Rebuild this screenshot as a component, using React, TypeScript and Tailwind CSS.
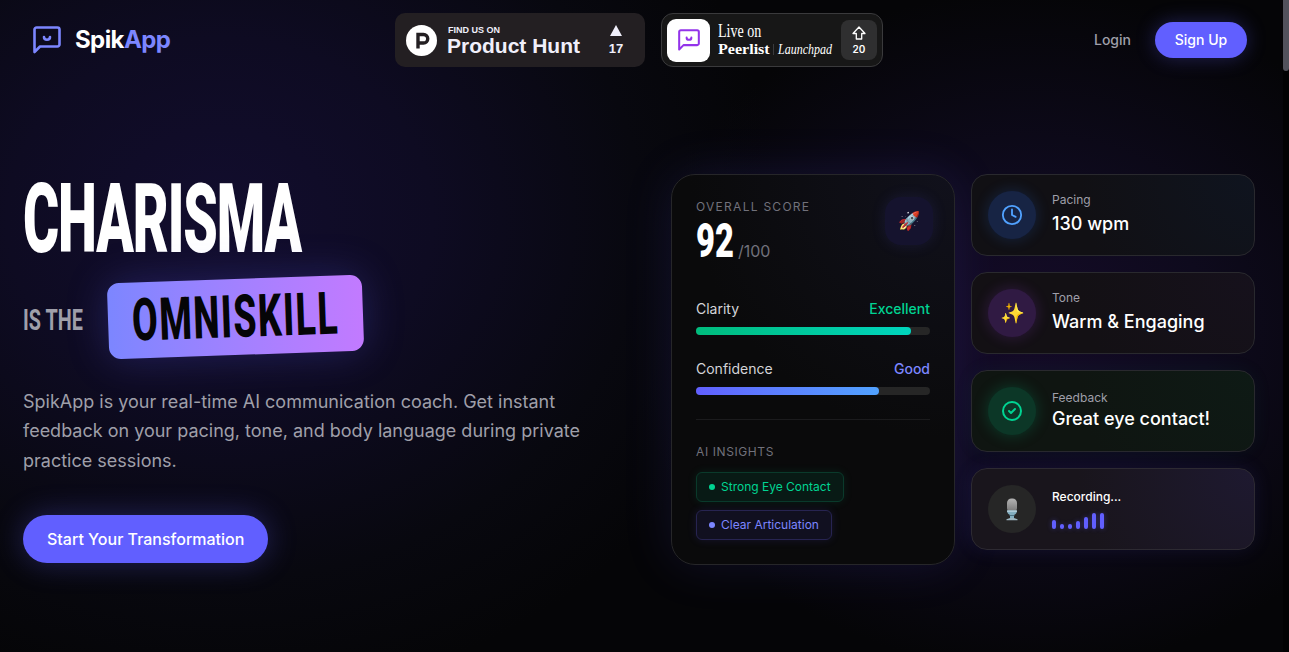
import type { ReactNode } from "react";
import { Clock } from "lucide-react";

export default function App() {
  return (
    <div className="flex h-[652px] w-full overflow-hidden bg-[#050507] font-['Inter',sans-serif] text-white">
      <div className="h-full w-[1283px] shrink-0 bg-[radial-gradient(ellipse_560px_480px_at_220px_220px,#120d2e_0%,#0e0b22_38%,#08080f_75%,transparent_100%),radial-gradient(ellipse_400px_340px_at_1030px_330px,#150b28_0%,#0e0a1d_45%,transparent_100%)]">
        <div className="w-[1278px]">
          <Header />
          <main className="flex gap-16 px-[23px] pt-[94px]">
            <Hero />
            <div className="flex w-[584px] gap-4">
              <ScoreCard />
              <StatCards />
            </div>
          </main>
        </div>
      </div>
      <div className="h-full w-1.5 bg-[#020203]">
        <div className="h-[71px] rounded-b-full bg-[#52525c]" />
      </div>
    </div>
  );
}

function LogoMark({ className }: { className?: string }) {
  return (
    <svg
      viewBox="0 0 28 28"
      fill="none"
      stroke="currentColor"
      strokeWidth="2.6"
      strokeLinecap="round"
      strokeLinejoin="round"
      className={className}
    >
      <path d="M1.5 26V3.6A2.1 2.1 0 0 1 3.600 1.500h20.800a2.100 2.100 0 0 1 2.100 2.100v14.800a2.100 2.100 0 0 1-2.100 2.100H7z" />
      <path d="M11 11c0 3.700 6 3.700 6 0" />
    </svg>
  );
}

function Header() {
  return (
    <header className="flex h-20 items-center pr-[31px] pl-8">
      <div className="flex w-[363px] items-center gap-3.5">
        <LogoMark className="ml-px size-7 text-[#7c86ff]" />
        <span className="text-2xl font-bold tracking-tight">
          Spik<span className="text-[#7c86ff]">App</span>
        </span>
      </div>
      <div className="flex gap-4">
        <ProductHuntBadge />
        <PeerlistBadge />
      </div>
      <div className="flex flex-1 items-center justify-end gap-6">
        <a className="text-sm font-medium text-[#9f9fa9]">Login</a>
        <button className="h-9 w-[92px] rounded-full bg-[#615fff] text-sm font-medium shadow-[0_0_20px_rgba(97,95,255,0.3)]">
          Sign Up
        </button>
      </div>
    </header>
  );
}

function ProductHuntBadge() {
  return (
    <div className="flex h-[54px] w-[250px] items-center rounded-[10px] bg-[#231f22] pl-[11px] font-['Liberation_Sans',sans-serif] font-bold text-[#f0effb]">
      <svg viewBox="0 0 31 31" className="size-[31px]">
        <circle cx="15.500" cy="15.500" r="15.500" fill="#fff" />
        <path
          d="M12 23.500V9.500h5.500a4.200 4.200 0 0 1 0 8.500H12"
          fill="none"
          stroke="#231f22"
          strokeWidth="3.400"
        />
      </svg>
      <div className="ml-2.5 w-[150px]">
        <div className="mt-0.5 ml-px text-[9px] leading-[10px]">FIND US ON</div>
        <div className="text-[21px] leading-[22px]">Product Hunt</div>
      </div>
      <div className="ml-[5px] flex w-7 flex-col items-center">
        <svg viewBox="0 0 12 11" className="h-[11px] w-3">
          <path d="M6 0l6 11H0z" fill="currentColor" />
        </svg>
        <span className="mt-[5px] text-[13px] leading-[15px]">17</span>
      </div>
    </div>
  );
}

function PeerlistBadge() {
  return (
    <div className="flex h-[54px] w-[222px] items-center rounded-xl border border-[#3a3a3c] bg-[#171717] pl-[5px] font-['Liberation_Serif',serif]">
      <div className="flex size-[43px] shrink-0 items-center justify-center rounded-[9px] bg-white">
        <LogoMark className="size-[22px] text-[#9333ea]" />
      </div>
      <div className="ml-2 w-[114px]">
        <div className="w-max origin-left scale-x-[0.74] text-[19px] leading-[18px]">Live on</div>
        <div className="flex h-[18px] items-center leading-[18px]">
          <div className="w-[55px] shrink-0">
            <div className="w-max origin-left scale-x-[1.07] text-[15px] font-bold">Peerlist</div>
          </div>
          <div className="h-[11px] w-px shrink-0 bg-[#3a3a3c]" />
          <div className="ml-1 w-max shrink-0 origin-left scale-x-[0.8] text-[15px] italic">Launchpad</div>
        </div>
      </div>
      <div className="ml-[9px] flex h-10 w-9 shrink-0 flex-col items-center justify-center rounded-lg bg-[#2f2f30] font-['Inter',sans-serif]">
        <svg viewBox="0 0 14 14" className="size-3.5" fill="none" stroke="currentColor" strokeWidth="1.3" strokeLinejoin="round">
          <path d="M7 1l6 6.500H9.700V13H4.300V7.500H1z" />
        </svg>
        <span className="mt-[3px] text-[10px] leading-3 font-semibold">20</span>
      </div>
    </div>
  );
}

function Hero() {
  return (
    <div className="w-[584px]">
      <h1 className="font-['Roboto',sans-serif]">
        <div className="h-[96px] w-[280px] text-[96px] leading-[90px] font-black">
          <span className="inline-block origin-left scale-x-[0.575] tracking-[-0.02em]">CHARISMA</span>
        </div>
        <div className="flex h-[96px] items-center">
          <div className="w-[85px] text-[30px] font-bold text-[#9f9fa9]">
            <span className="mt-0.5 inline-block origin-left scale-x-[0.66] whitespace-nowrap">IS THE</span>
          </div>
          <div className="-mt-0.5 h-[76px] w-[255px] shrink-0 -rotate-2 rounded-xl bg-linear-to-r from-[#7c86ff] to-[#c27aff] pl-6 text-[59px] leading-[76px] font-extrabold text-[#050507] shadow-[0_0_40px_rgba(97,95,255,0.25)]">
            <span className="inline-block origin-left scale-x-[0.63] tracking-[0.04em]">OMNISKILL</span>
          </div>
        </div>
      </h1>
      <p className="mt-[21px] text-lg leading-[29.250px] text-[#9f9fa9]">
        SpikApp is your real-time AI communication coach. Get instant feedback on your pacing, tone,
        and body language during private practice sessions.
      </p>
      <button className="mt-10 h-12 rounded-full bg-[#615fff] px-6 text-base font-medium shadow-[0_0_30px_rgba(97,95,255,0.3)]">
        Start Your Transformation
      </button>
    </div>
  );
}

function ScoreCard() {
  return (
    <section className="h-[391px] w-[284px] rounded-3xl border border-[#262629] bg-[radial-gradient(circle_at_100%_0%,#11111c_0%,#0a0a0b_55%)] px-6 pt-6 shadow-[0_0_50px_rgba(97,95,255,0.13)]">
      <div className="flex items-start justify-between">
        <div>
          <div className="text-xs tracking-[0.106em] text-[#71717b]">OVERALL SCORE</div>
          <div className="flex h-12 items-end">
            <div className="w-[39px] font-['Roboto',sans-serif] text-[48px] leading-[44px] font-black">
              <span className="inline-block origin-left scale-x-[0.68]">92</span>
            </div>
            <span className="ml-[3px] text-base text-[#71717b]">/100</span>
          </div>
        </div>
        <div className="-mt-0.5 mr-[-3px] flex size-12 items-center justify-center rounded-2xl bg-[#15132e] text-lg shadow-[0_0_15px_rgba(97,95,255,0.12)]">
          🚀
        </div>
      </div>
      <div className="mt-9 space-y-6">
        <Meter label="Clarity" value="Excellent" percent={92} tone="text-[#00d492]" fill="from-[#00bc7d] to-[#00d5be]" />
        <Meter label="Confidence" value="Good" percent={78} tone="text-[#7c86ff]" fill="from-[#615fff] to-[#51a2ff]" />
      </div>
      <div className="mt-6 border-t border-[#1b1b1d] pt-6">
        <div className="text-xs tracking-wider text-[#71717b]">AI INSIGHTS</div>
        <div className="mt-3 flex flex-col items-start gap-2">
          <span className="flex h-[30px] items-center gap-1.5 rounded-md border border-[#0a3a2b] bg-[#081a15] px-3 text-xs text-[#00d492] shadow-[0_0_10px_rgba(0,188,125,0.12)]">
            <i className="size-1.5 rounded-full bg-[#00d492]" />
            Strong Eye Contact
          </span>
          <span className="flex h-[30px] items-center gap-1.5 rounded-md border border-[#272451] bg-[#111020] px-3 text-xs text-[#7c86ff] shadow-[0_0_10px_rgba(97,95,255,0.14)]">
            <i className="size-1.5 rounded-full bg-[#7c86ff]" />
            Clear Articulation
          </span>
        </div>
      </div>
    </section>
  );
}

function Meter({
  label,
  value,
  percent,
  tone,
  fill,
}: {
  label: string;
  value: string;
  percent: number;
  tone: string;
  fill: string;
}) {
  return (
    <div>
      <div className="flex justify-between text-sm">
        <span className="text-[#d4d4d8]">{label}</span>
        <span className={`font-medium ${tone}`}>{value}</span>
      </div>
      <div className="mt-2 h-2 rounded-full bg-[#262626]">
        <div className={`h-full rounded-full bg-linear-to-r ${fill}`} style={{ width: `${percent}%` }} />
      </div>
    </div>
  );
}

const bars = [9, 5, 5, 8, 12, 16, 16];

function StatCards() {
  return (
    <div className="flex w-[284px] flex-col gap-4">
      <Stat
        label="Pacing"
        value="130 wpm"
        card="bg-[radial-gradient(circle_at_100%_0%,#0f141f_0%,#111014_60%)]"
        badge="bg-[#172444] text-[#51a2ff] shadow-[0_0_15px_rgba(43,127,255,0.2)]"
        icon={<Clock size={24} className="p-px" />}
      />
      <Stat
        label="Tone"
        value="Warm & Engaging"
        card="bg-[radial-gradient(circle_at_100%_0%,#16111c_0%,#131014_60%)]"
        badge="bg-[#301a43] text-xl shadow-[0_0_15px_rgba(173,70,255,0.2)]"
        icon="✨"
      />
      <Stat
        label="Feedback"
        value="Great eye contact!"
        card="bg-[radial-gradient(circle_at_100%_0%,#0e1a15_0%,#0f1511_60%)] shadow-[0_0_20px_rgba(0,188,125,0.06)]"
        badge="bg-[#0c3727] text-[#00d492] shadow-[0_0_15px_rgba(0,188,125,0.25)]"
        gap="-mt-px -mb-px"
        icon={
          <svg viewBox="0 0 24 24" width="24" height="24" fill="none" stroke="currentColor" strokeWidth="2" strokeLinecap="round" strokeLinejoin="round">
            <circle cx="12" cy="12" r="9" />
            <path d="M9 12l2 2 4-4" />
          </svg>
        }
      />
      <div className="flex h-[82px] items-center gap-4 rounded-2xl border border-[#2d2a32] bg-[radial-gradient(circle_at_100%_0%,#1e1930_0%,#19151c_60%)] px-4 shadow-[0_0_20px_rgba(97,95,255,0.1)]">
        <div className="flex size-12 items-center justify-center rounded-full bg-[#262626]">
          <Microphone />
        </div>
        <div>
          <div className="text-xs font-medium">Recording...</div>
          <div className="mt-2 flex h-4 items-end gap-1">
            {bars.map((height, i) => (
              <div
                key={i}
                className="w-1 rounded-full bg-[#615fff] shadow-[0_0_5px_rgba(97,95,255,0.4)]"
                style={{ height }}
              />
            ))}
          </div>
        </div>
      </div>
    </div>
  );
}

function Microphone() {
  return (
    <svg viewBox="0 0 12 23" className="h-[23px] w-3">
      <defs>
        <linearGradient id="mic-head" x1="0" y1="0" x2="0" y2="1">
          <stop offset="0" stopColor="#b4b4b4" />
          <stop offset="1" stopColor="#737373" />
        </linearGradient>
      </defs>
      <rect x="1" y="0.500" width="10" height="14" rx="4.500" fill="url(#mic-head)" />
      <path d="M1 12.500h10c0 2-1 3.500-3 4.500v3H4v-3c-2-1-3-2.500-3-4.500z" fill="#82aec0" />
      <path d="M1 12.500h10v1.300H1z" fill="#b9d3df" />
      <path d="M3.500 17h5v1h-5z" fill="#4b7182" />
      <path d="M4 20h4l3.500 1.300v1H.5v-1z" fill="#9cb5c0" />
    </svg>
  );
}

function Stat({
  label,
  value,
  card,
  badge,
  icon,
  gap = "mt-0.5",
}: {
  label: string;
  value: string;
  card: string;
  badge: string;
  icon: ReactNode;
  gap?: string;
}) {
  return (
    <div className={`flex h-[82px] items-center gap-4 rounded-2xl border border-[#29292e] px-4 ${card}`}>
      <div className={`flex size-12 items-center justify-center rounded-full ${badge}`}>{icon}</div>
      <div>
        <div className="text-xs leading-4 text-[#9f9fa9]">{label}</div>
        <div className={`text-lg leading-7 font-medium ${gap}`}>{value}</div>
      </div>
    </div>
  );
}
